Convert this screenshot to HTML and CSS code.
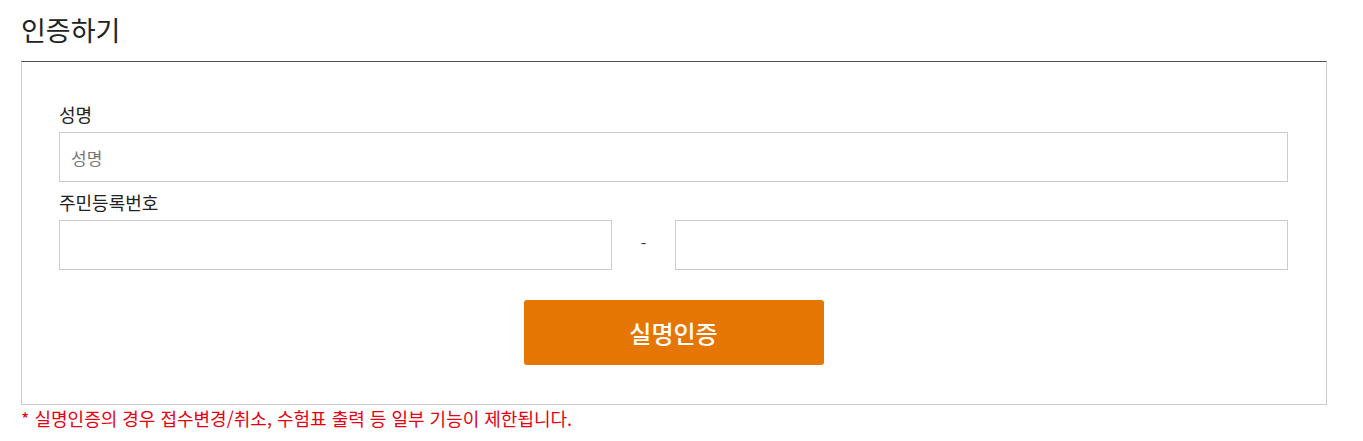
FILE: index.html
```html
<!DOCTYPE html>
<html lang="ko">
<head>
<meta charset="utf-8">
<title>인증하기</title>
<link rel="stylesheet" href="styles.css">
</head>
<body>
<div class="page">
  <h1 class="title">인증하기</h1>
  <div class="box">
    <div class="field">
      <label class="label" for="name">성명</label>
      <input class="input" id="name" type="text" placeholder="성명">
    </div>
    <div class="field field-rrn">
      <label class="label" for="rrn1">주민등록번호</label>
      <div class="rrn-row">
        <input class="input" id="rrn1" type="text">
        <span class="dash">-</span>
        <input class="input" id="rrn2" type="password">
      </div>
    </div>
    <div class="actions">
      <button class="btn" type="button">실명인증</button>
    </div>
  </div>
  <p class="notice">* 실명인증의 경우 접수변경/취소, 수험표 출력 등 일부 기능이 제한됩니다.</p>
</div>
</body>
</html>
```

FILE: styles.css
```css
* { box-sizing: border-box; }
html, body { margin: 0; padding: 0; background: #fff; }
body {
  font-family: "Noto Sans CJK KR", "Noto Sans", "Liberation Sans", sans-serif;
  color: #333;
}
.page {
  padding: 15px 0 0 21px;
  width: 1327px;
}
.title {
  margin: 0 0 16px;
  font-size: 27px;
  line-height: 30px;
  font-weight: 400;
  color: #222;
}
.box {
  border: 1px solid #ccc;
  border-top: 1px solid #555;
  padding: 42px 38px 39px 37px;
}
.field { display: flex; flex-direction: column; }
.field-rrn { margin-top: 10px; }
.label {
  font-size: 18px;
  line-height: 20px;
  color: #222;
  margin-bottom: 8px;
}
.input {
  height: 50px;
  width: 100%;
  border: 1px solid #ccc;
  border-radius: 0;
  padding: 0 11px;
  font-family: inherit;
  font-size: 17px;
  color: #333;
  background: #fff;
  outline: none;
}
.input::placeholder { color: #777; }
.rrn-row {
  display: grid;
  grid-template-columns: 553px 63px 1fr;
  align-items: center;
}
.dash {
  text-align: center;
  font-size: 16px;
  color: #333;
  line-height: 20px;
  padding-bottom: 4px;
}
.actions {
  display: flex;
  justify-content: center;
  margin-top: 30px;
}
.btn {
  width: 300px;
  height: 65px;
  border: 0;
  border-radius: 3px;
  background: #e67603;
  color: #fff;
  font-family: inherit;
  font-size: 24px;
  font-weight: 500;
  cursor: pointer;
}
.notice {
  margin: 0;
  font-size: 18px;
  line-height: 26px;
  color: #e50012;
}
```
